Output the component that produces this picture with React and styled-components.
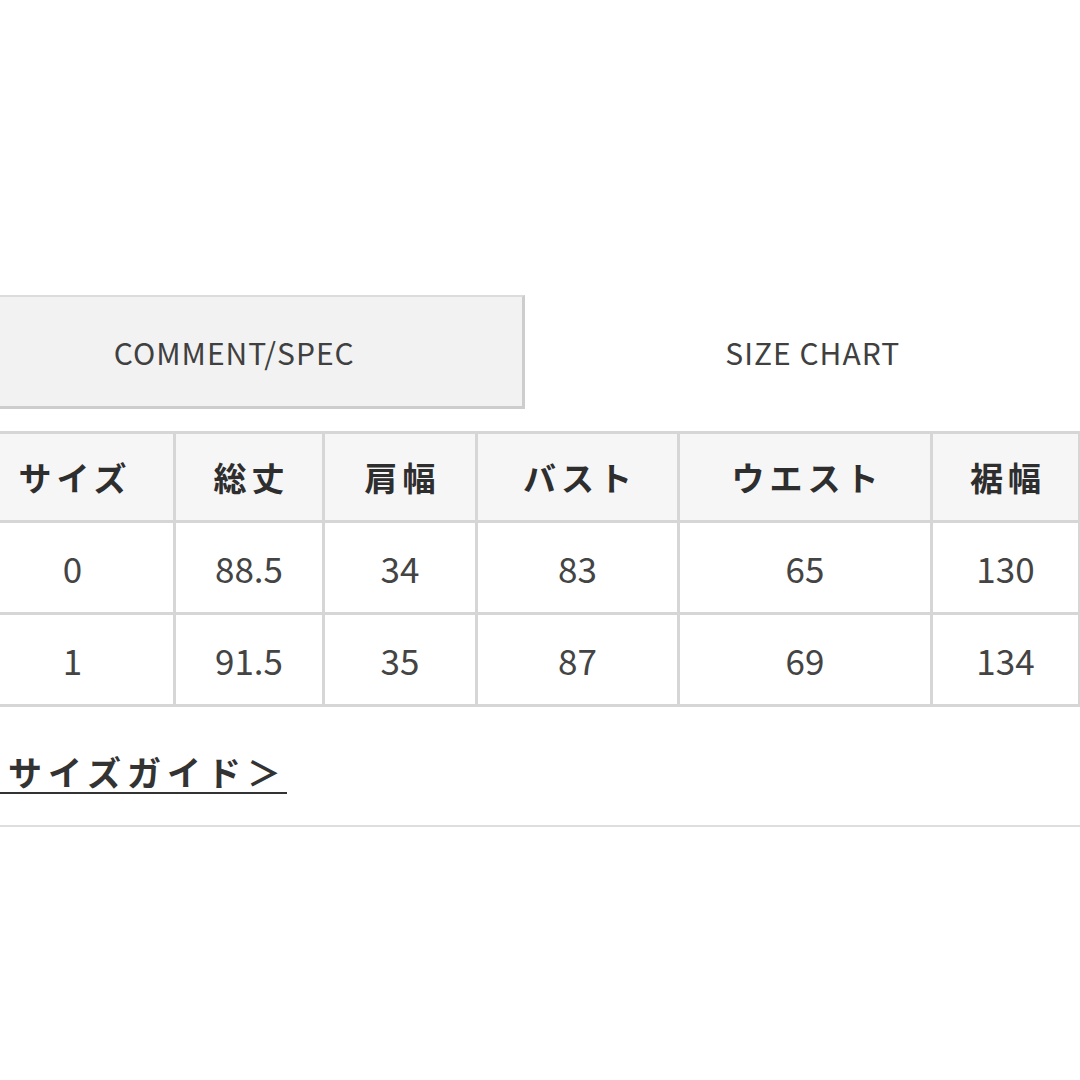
import React from "react";
import styled, { createGlobalStyle } from "styled-components";

const Global = createGlobalStyle`
  html, body {
    margin: 0;
    padding: 0;
    background: #ffffff;
    overflow: hidden;
  }
  body {
    font-family: "Noto Sans CJK JP", "Noto Sans", sans-serif;
    color: #3a3a3a;
  }
`;

const Page = styled.div`
  width: 1080px;
  height: 1080px;
  padding-top: 295px;
  box-sizing: border-box;
  overflow: hidden;
`;

const Tabs = styled.div`
  display: flex;
  margin-left: -56px;
  width: 1156px;
  height: 114px;
`;

const Tab = styled.div`
  flex: 1;
  display: flex;
  align-items: center;
  justify-content: center;
  box-sizing: border-box;
  padding-left: 1px;
  font-size: 30px;
  letter-spacing: 1px;
  color: #404040;
  background: ${(p) => (p.$active ? "#f2f2f2" : "#ffffff")};
  border: ${(p) => (p.$active ? "2px solid #dcdcdc" : "none")};
  border-right-color: #cdcdcd;
  border-bottom-color: #cdcdcd;
  border-right-width: ${(p) => (p.$active ? "3px" : "0")};
  border-bottom-width: ${(p) => (p.$active ? "3px" : "0")};
`;

const Table = styled.table`
  margin-top: 22px;
  margin-left: -31px;
  width: 1109px;
  border-collapse: collapse;
  table-layout: fixed;
  border: 3px solid #d6d6d6;
`;

const HeadCell = styled.th`
  height: 86px;
  padding: 0 0 0 5px;
  background: #f6f6f6;
  border: 3px solid #d6d6d6;
  font-size: 33px;
  font-weight: 700;
  letter-spacing: 5px;
  color: #2e2e2e;
  text-align: center;
`;

const Cell = styled.td`
  height: 89px;
  padding: 0;
  border: 3px solid #d6d6d6;
  font-size: 35px;
  font-weight: 400;
  color: #444444;
  text-align: center;
`;

const GuideLink = styled.a`
  display: inline-block;
  margin-top: 46px;
  margin-left: -32px;
  font-size: 34px;
  line-height: 38px;
  font-weight: 700;
  letter-spacing: 6px;
  color: #333333;
  text-decoration: underline;
  text-decoration-thickness: 2px;
  text-underline-offset: 6px;
`;

const Divider = styled.hr`
  margin: 34px 0 0;
  border: none;
  height: 2px;
  background: #dedede;
`;

const cols = [204, 149, 153, 202, 253, 148];
const head = ["サイズ", "総丈", "肩幅", "バスト", "ウエスト", "裾幅"];
const rows = [
  ["0", "88.5", "34", "83", "65", "130"],
  ["1", "91.5", "35", "87", "69", "134"],
];

export default function App() {
  return (
    <Page>
      <Global />
      <Tabs>
        <Tab $active>COMMENT/SPEC</Tab>
        <Tab>SIZE CHART</Tab>
      </Tabs>
      <Table>
        <colgroup>
          {cols.map((w, i) => (
            <col key={i} style={{ width: w }} />
          ))}
        </colgroup>
        <thead>
          <tr>
            {head.map((h) => (
              <HeadCell key={h}>{h}</HeadCell>
            ))}
          </tr>
        </thead>
        <tbody>
          {rows.map((r, i) => (
            <tr key={i}>
              {r.map((c, j) => (
                <Cell key={j}>{c}</Cell>
              ))}
            </tr>
          ))}
        </tbody>
      </Table>
      <GuideLink href="#">＜サイズガイド＞</GuideLink>
      <Divider />
    </Page>
  );
}
